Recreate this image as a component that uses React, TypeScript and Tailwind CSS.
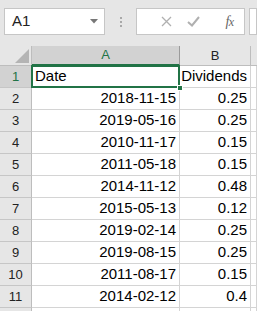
import React from "react";

const rows: [string, string][] = [
  ["2018-11-15", "0.25"],
  ["2019-05-16", "0.25"],
  ["2010-11-17", "0.15"],
  ["2011-05-18", "0.15"],
  ["2014-11-12", "0.48"],
  ["2015-05-13", "0.12"],
  ["2019-02-14", "0.25"],
  ["2019-08-15", "0.25"],
  ["2011-08-17", "0.15"],
  ["2014-02-12", "0.4"],
  ["", ""],
];

const cols = "grid grid-cols-[32px_148px_71px_1fr]";

const RowHead = ({ n, active }: { n: number | string; active?: boolean }) => (
  <div
    className={
      "h-[22px] flex items-center justify-center text-[13px] border-b border-r " +
      (active
        ? "bg-[#d2d2d2] text-[#217346] border-b-[#c6c6c6] border-r-[#9b9b9b]"
        : "bg-[#e6e6e6] text-[#222] border-b-[#c6c6c6] border-r-[#bdbdbd]")
    }
  >
    {n}
  </div>
);

const Cell = ({ children, left }: { children?: React.ReactNode; left?: boolean }) => (
  <div
    className={
      "h-[22px] bg-white border-b border-r border-[#d4d4d4] flex items-center text-[15px] text-black overflow-hidden whitespace-nowrap " +
      (left ? "justify-start pl-[3px]" : "justify-end pr-[3px]")
    }
  >
    {children}
  </div>
);

export default function App() {
  return (
    <div className="w-[257px] h-[311px] overflow-hidden bg-[#e6e6e6] font-['Liberation_Sans',Arial,sans-serif]">
      {/* formula bar */}
      <div className="h-[46px] flex items-start pt-[8px] pl-[4px]">
        <div className="w-[101px] h-[27px] bg-white border border-[#c6c6c6] flex items-center justify-between pl-[7px] pr-[6px]">
          <span className="text-[15px] text-[#222]">A1</span>
          <svg width="8" height="5" viewBox="0 0 8 5">
            <path d="M0 0 L8 0 L4 4.5 Z" fill="#777" />
          </svg>
        </div>
        <div className="w-[31px] h-[27px] flex flex-col items-center justify-center gap-[2px]">
          <div className="w-[2px] h-[2px] bg-[#a8a8a8]" />
          <div className="w-[2px] h-[2px] bg-[#a8a8a8]" />
          <div className="w-[2px] h-[2px] bg-[#a8a8a8]" />
        </div>
        <div className="w-[109px] h-[27px] bg-white border border-[#c6c6c6] flex items-center">
          <div className="w-[36px] flex justify-end pr-[1px]">
            <svg width="11" height="11" viewBox="0 0 11 11">
              <path d="M1 1 L10 10 M10 1 L1 10" stroke="#b0b0b0" strokeWidth="1.3" />
            </svg>
          </div>
          <div className="w-[36px] flex justify-center pl-[4px]">
            <svg width="13" height="11" viewBox="0 0 13 11">
              <path d="M1 6 L5 9.5 L12 1" stroke="#b0b0b0" strokeWidth="2" fill="none" />
            </svg>
          </div>
          <div className="flex-1 flex justify-center pl-[6px]">
            <span className="font-['Liberation_Serif',serif] italic text-[14px] text-[#666] tracking-[-0.5px]">
              f<span className="text-[12px]">x</span>
            </span>
          </div>
        </div>
        <div className="ml-[4px] flex-1 h-[27px] bg-white border border-[#c6c6c6]" />
      </div>

      {/* grid */}
      <div className={cols}>
        <div className="h-[20px] bg-[#e6e6e6] border-b border-r border-[#bdbdbd] flex items-end justify-end pr-[2px] pb-[2px]">
          <svg width="14" height="14" viewBox="0 0 14 14">
            <path d="M14 0 L14 14 L0 14 Z" fill="#b4b4b4" />
          </svg>
        </div>
        <div className="h-[20px] bg-[#d2d2d2] border-b-2 border-b-[#217346] border-r border-r-[#9b9b9b] flex items-center justify-center text-[13px] text-[#217346]">
          A
        </div>
        <div className="h-[20px] bg-[#e6e6e6] border-b border-r border-[#bdbdbd] flex items-center justify-center text-[13px] text-[#222]">
          B
        </div>
        <div className="h-[20px] bg-[#e6e6e6] border-b border-[#bdbdbd]" />

        <RowHead n={1} active />
        <div className="relative">
          <Cell left>Date</Cell>
          <div className="absolute -left-[1px] -top-[1px] -right-[0px] -bottom-[0px] border-2 border-[#217346]" />
          <div className="absolute -right-[3px] -bottom-[3px] w-[6px] h-[6px] bg-[#217346] border border-white" />
        </div>
        <Cell>Dividends</Cell>
        <Cell />

        {rows.map(([d, v], i) => (
          <React.Fragment key={i}>
            <RowHead n={i + 2 <= 11 ? i + 2 : ""} />
            <Cell>{d}</Cell>
            <Cell>{v}</Cell>
            <Cell />
          </React.Fragment>
        ))}
      </div>
    </div>
  );
}
